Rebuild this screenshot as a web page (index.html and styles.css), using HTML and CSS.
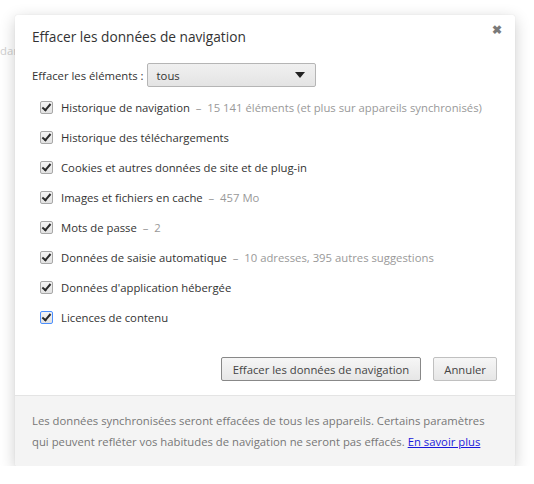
FILE: index.html
```html
<!DOCTYPE html>
<html lang="fr">
<head>
    <meta charset="UTF-8">
    <meta name="viewport" content="width=device-width, initial-scale=1.0">
    <title>Effacer les données de navigation</title>
    <link rel="stylesheet" href="styles.css">
</head>
<body>
    <div class="page-behind">dan</div>
    <div class="dialog">
        <div class="dialog-body">
            <div class="dialog-header">
                <h1>Effacer les données de navigation</h1>
                <span class="close">&#x2716;</span>
            </div>
            <div class="period-row">
                <span>Effacer les éléments :</span>
                <div class="select">
                    <span>tous</span>
                    <span class="arrow"></span>
                </div>
            </div>
            <ul class="options">
                <li><span class="checkbox"></span>Historique de navigation <span class="count">&nbsp;–&nbsp; 15 141 éléments (et plus sur appareils synchronisés)</span></li>
                <li><span class="checkbox"></span>Historique des téléchargements</li>
                <li><span class="checkbox"></span>Cookies et autres données de site et de plug-in</li>
                <li><span class="checkbox"></span>Images et fichiers en cache <span class="count">&nbsp;–&nbsp; 457 Mo</span></li>
                <li><span class="checkbox"></span>Mots de passe <span class="count">&nbsp;–&nbsp; 2</span></li>
                <li><span class="checkbox"></span>Données de saisie automatique <span class="count">&nbsp;–&nbsp; 10 adresses, 395 autres suggestions</span></li>
                <li><span class="checkbox"></span>Données d'application hébergée</li>
                <li><span class="checkbox focused"></span>Licences de contenu</li>
            </ul>
            <div class="actions">
                <button class="btn btn-default">Effacer les données de navigation</button>
                <button class="btn">Annuler</button>
            </div>
        </div>
        <div class="dialog-footer">
            <p>Les données synchronisées seront effacées de tous les appareils. Certains paramètres</p>
            <p>qui peuvent refléter vos habitudes de navigation ne seront pas effacés. <a href="#">En savoir plus</a></p>
        </div>
    </div>
</body>
</html>
```

FILE: styles.css
```css
body {
    margin: 0;
    padding: 0;
    background: #fff;
    font-family: "Open Sans", "Noto Sans", sans-serif;
    font-size: 11.3px;
    color: #333;
}
.page-behind {
    position: absolute;
    left: 0;
    top: 43px;
    color: #cfcfcf;
}
.dialog {
    position: relative;
    margin: 15px 0 0 15px;
    width: 500px;
    background: #fff;
    border-radius: 2px;
    box-shadow: 0 4px 16px rgba(0,0,0,0.2), 0 0 1px rgba(0,0,0,0.15);
    overflow: hidden;
}
.dialog-body {
    padding: 12px 18px 14px 17px;
}
.dialog-header {
    display: flex;
    justify-content: space-between;
    align-items: flex-start;
}
h1 {
    margin: 0;
    font-size: 13.7px;
    font-weight: normal;
    line-height: 20px;
    color: #333;
}
.close {
    margin-top: -6px;
    margin-right: -5px;
    color: #7a7a7a;
    font-size: 12px;
    font-weight: bold;
}
.period-row {
    display: flex;
    align-items: center;
    margin-top: 16px;
    gap: 3px;
}
.select {
    display: flex;
    justify-content: space-between;
    align-items: center;
    box-sizing: border-box;
    width: 169px;
    height: 24px;
    padding: 0 10px 0 9px;
    border: 1px solid #b5b5b5;
    border-radius: 2px;
    background: linear-gradient(#f0f0f0, #e4e4e4);
}
.arrow {
    width: 0;
    height: 0;
    border-left: 5px solid transparent;
    border-right: 5px solid transparent;
    border-top: 6px solid #222;
}
.options {
    list-style: none;
    margin: 5px 0 0 0;
    padding: 0 0 0 8px;
}
.options li {
    display: flex;
    align-items: center;
    height: 30px;
    white-space: pre;
}
.checkbox {
    position: relative;
    flex-shrink: 0;
    box-sizing: border-box;
    width: 13px;
    height: 13px;
    margin-right: 8px;
    border: 1px solid #a8a8a8;
    border-radius: 2px;
    background: linear-gradient(#f4f4f4, #e2e2e2);
}
.checkbox::after {
    content: "";
    position: absolute;
    left: 3px;
    top: 0px;
    width: 3px;
    height: 7px;
    border-right: 2px solid #2a2a2a;
    border-bottom: 2px solid #2a2a2a;
    transform: rotate(40deg);
}
.checkbox.focused {
    border-color: #4d90fe;
}
.count {
    color: #999;
}
.actions {
    display: flex;
    justify-content: flex-end;
    gap: 12px;
    margin-top: 25px;
}
.btn {
    height: 24px;
    padding: 0 10px;
    font-family: inherit;
    font-size: 11.3px;
    color: #444;
    border: 1px solid #c0c0c0;
    border-radius: 2px;
    background: linear-gradient(#f6f6f6, #e6e6e6);
}
.btn-default {
    padding: 0 11px;
    border-color: #888;
}
.dialog-footer {
    padding: 14px 18px 14px 17px;
    border-top: 1px solid #e4e4e4;
    background: #f4f4f4;
    color: #777;
    line-height: 21px;
}
.dialog-footer p {
    margin: 0;
    white-space: nowrap;
}
.dialog-footer a {
    color: #1a1adb;
}
```
